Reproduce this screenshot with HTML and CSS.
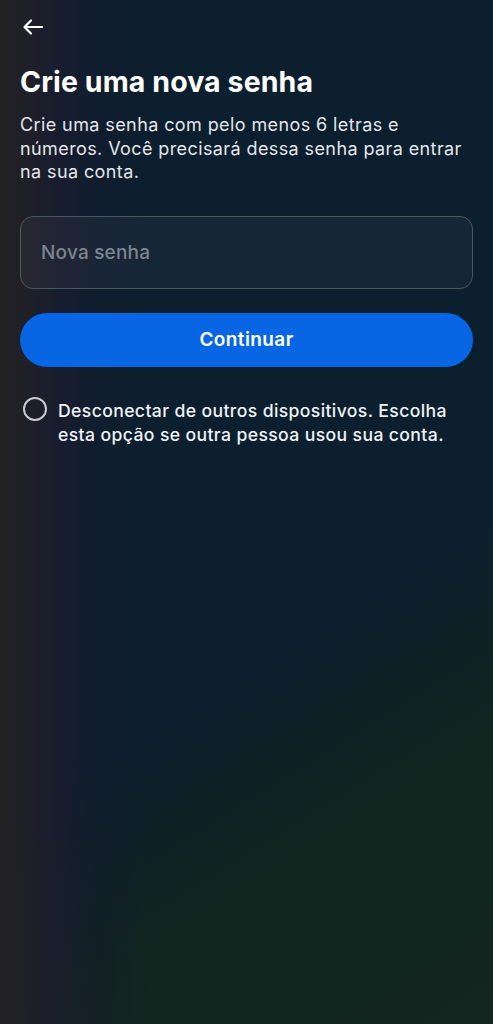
FILE: index.html
```html
<!DOCTYPE html>
<html lang="pt-BR">

<head>
    <meta charset="UTF-8">
    <meta name="viewport" content="width=device-width, initial-scale=1.0">
    <title>Crie uma nova senha</title>
    <link rel="stylesheet" href="styles.css">
</head>

<body>
    <div class="screen">
        <button class="back" type="button" aria-label="Voltar">
            <svg width="22" height="18" viewBox="0 0 22 18" fill="none" stroke="#fff" stroke-width="2.2" stroke-linecap="round" stroke-linejoin="round">
                <path d="M20 9H2.5M9 2.5L2.5 9l6.5 6.5"/>
            </svg>
        </button>
        <h1 class="title">Crie uma nova senha</h1>
        <p class="lead">Crie uma senha com pelo menos 6 letras e números. Você precisará dessa senha para entrar na sua conta.</p>
        <form class="form">
            <input class="field" type="password" placeholder="Nova senha">
            <button class="primary" type="button">Continuar</button>
            <label class="option">
                <span class="radio"></span>
                <span class="option-text">Desconectar de outros dispositivos. Escolha esta opção se outra pessoa usou sua conta.</span>
            </label>
        </form>
    </div>
</body>

</html>
```

FILE: styles.css
```css
* {
    box-sizing: border-box;
}

html, body {
    margin: 0;
    height: 100%;
}

body {
    background-color: #0c1f2e;
    background-image:
        linear-gradient(to right, rgba(35, 34, 36, 1) 0, rgba(33, 32, 38, 0.95) 22px, rgba(28, 28, 46, 0.75) 55px, rgba(22, 27, 46, 0.4) 100px, rgba(13, 31, 47, 0) 150px),
        linear-gradient(148deg, rgba(17, 38, 32, 0) 62%, rgba(16, 37, 30, 1) 78%, rgba(19, 39, 32, 1) 100%);
    color: #fff;
    font-family: Inter, Roboto, "Noto Sans", sans-serif;
}

.screen {
    padding: 12px 20px 0 20px;
}

.back {
    display: block;
    background: none;
    border: none;
    padding: 6px 0;
    margin: 0 0 0 2px;
    cursor: pointer;
}

.back svg {
    display: block;
}

.title {
    font-size: 28.5px;
    font-weight: 700;
    letter-spacing: 0.1px;
    margin: 23px 0 14px 0;
    line-height: 34px;
}

.lead {
    font-size: 18px;
    line-height: 23.5px;
    letter-spacing: 0.4px;
    margin: 0;
    color: #e4e6eb;
}

.form {
    display: flex;
    flex-direction: column;
    margin-top: 32px;
}

.field {
    height: 73px;
    border: 1px solid #4a5661;
    border-radius: 13px;
    background: rgba(255, 255, 255, 0.04);
    color: #fff;
    font-family: inherit;
    font-size: 19px;
    letter-spacing: 0.2px;
    padding: 0 20px;
    outline: none;
}

.field::placeholder {
    color: #7c858d;
    font-weight: 500;
}

.primary {
    margin-top: 24px;
    height: 54px;
    border: none;
    border-radius: 27px;
    background-color: #0865e3;
    color: #fff;
    font-family: inherit;
    font-size: 19px;
    font-weight: 600;
    letter-spacing: 0.4px;
    cursor: pointer;
}

.option {
    display: flex;
    align-items: flex-start;
    gap: 11px;
    margin-top: 30px;
    padding-left: 3px;
    cursor: pointer;
}

.radio {
    flex: none;
    width: 24px;
    height: 24px;
    border: 2px solid #c7cbd0;
    border-radius: 50%;
}

.option-text {
    margin-top: 2px;
    font-size: 17.6px;
    line-height: 24.5px;
    letter-spacing: 0.38px;
    font-weight: 500;
    color: #f0f2f5;
}
```
